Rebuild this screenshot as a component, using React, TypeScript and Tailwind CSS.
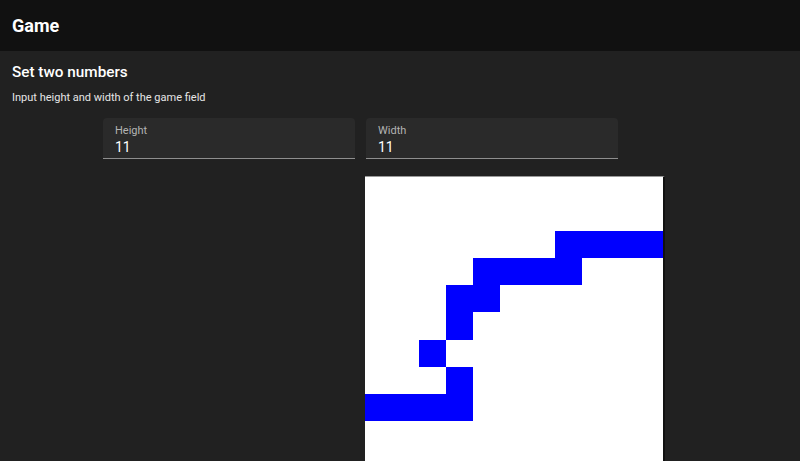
import { useState } from 'react';

// snake path cells: [row, col]
const filled: [number, number][] = [
  [2, 7], [2, 8], [2, 9], [2, 10],
  [3, 4], [3, 5], [3, 6], [3, 7],
  [4, 3], [4, 4],
  [5, 3],
  [6, 2],
  [7, 3],
  [8, 0], [8, 1], [8, 2], [8, 3],
];

function NumberField({ label, value, onChange }: { label: string; value: string; onChange: (v: string) => void }) {
  return (
    <label className="flex flex-col w-[252px] h-[41px] bg-[#2a2a2a] rounded-t border-b border-[#8e8e8e] px-3 pt-[6px]">
      <span className="text-[11px] leading-[14px] text-[#b3b3b3]">{label}</span>
      <input
        value={value}
        onChange={e => onChange(e.target.value)}
        className="bg-transparent outline-none text-[14px] leading-[18px] text-white w-full"
      />
    </label>
  );
}

export default function App() {
  const [height, setHeight] = useState('11');
  const [width, setWidth] = useState('11');
  const rows = parseInt(height) || 11;
  const cols = parseInt(width) || 11;
  const isOn = (r: number, c: number) => filled.some(([fr, fc]) => fr === r && fc === c);

  return (
    <div className="min-h-screen bg-[#212121] text-white font-['Roboto','Liberation_Sans',sans-serif]">
      <header className="h-[51px] bg-[#111111] flex items-center px-3">
        <h1 className="text-[18px] font-bold">Game</h1>
      </header>
      <main className="px-3">
        <h2 className="text-[15.3px] font-medium pt-[9px] leading-[24px]">Set two numbers</h2>
        <p className="text-[11px] leading-[16px] mt-[6px] text-[#e6e6e6]">Input height and width of the game field</p>
        <div className="flex gap-[11px] pl-[91px] mt-[12px]">
          <NumberField label="Height" value={height} onChange={setHeight} />
          <NumberField label="Width" value={width} onChange={setWidth} />
        </div>
        <div className="ml-[353px] mt-[17px] w-[300px] bg-white border-t border-[#9a9a9a] border-r-2 border-r-[#111111]">
          {Array.from({ length: rows }, (_, r) => (
            <div key={r} className="flex">
              {Array.from({ length: cols }, (_, c) => (
                <div key={c} className={`flex-1 h-[27.1px] ${isOn(r, c) ? 'bg-[#0000ff]' : 'bg-white'}`} />
              ))}
            </div>
          ))}
        </div>
      </main>
    </div>
  );
}
